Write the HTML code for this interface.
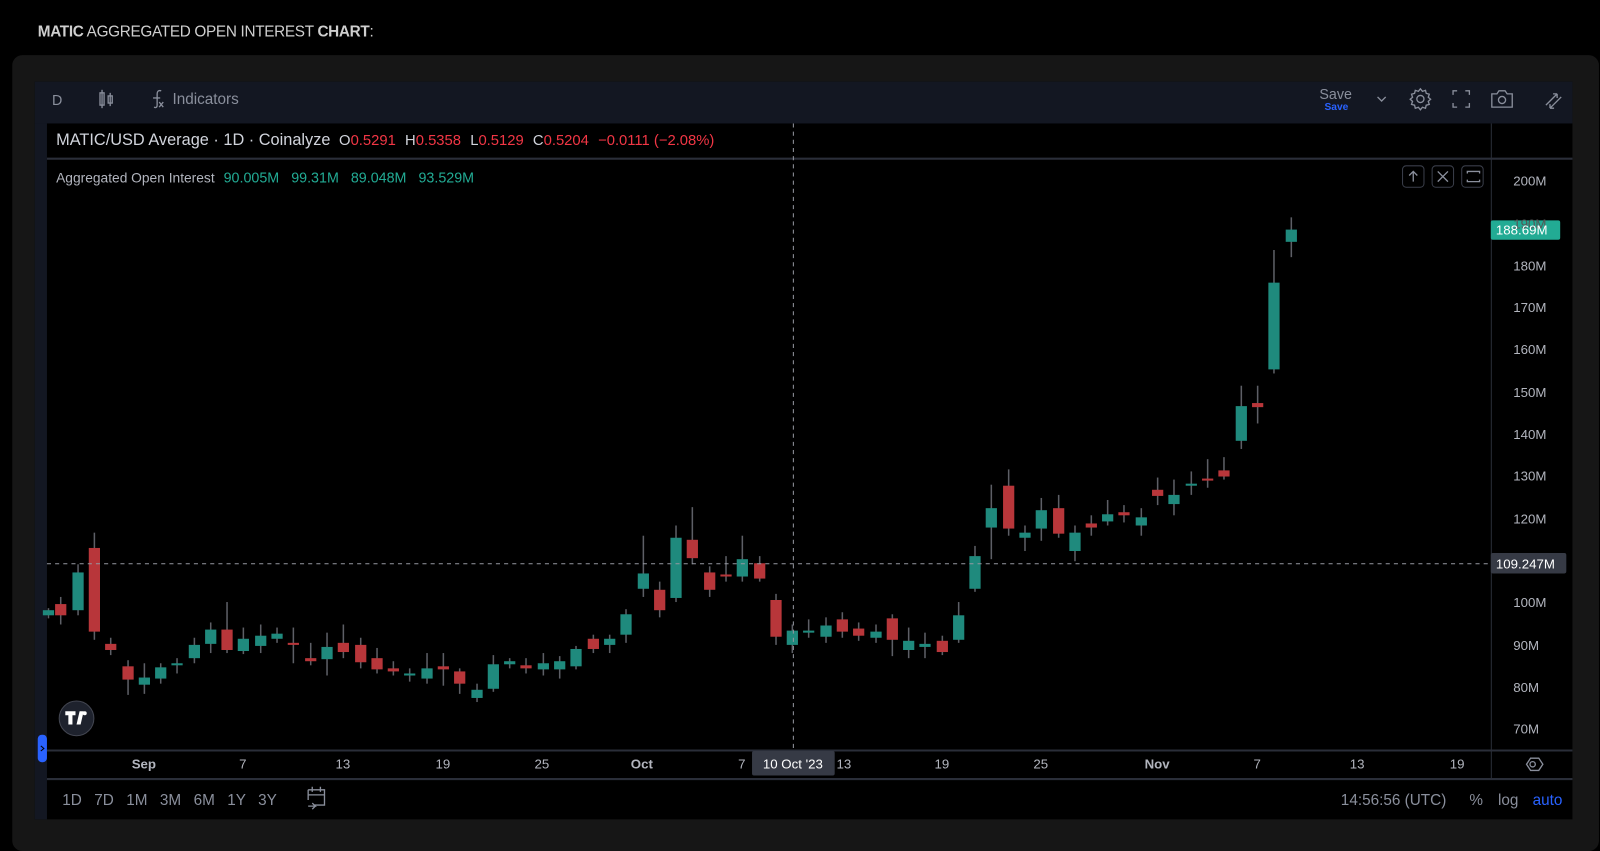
<!DOCTYPE html>
<html><head><meta charset="utf-8">
<style>
html,body{margin:0;padding:0;background:#000;width:1600px;height:825px;overflow:hidden;font-family:"Liberation Sans",Arial,sans-serif}
#w{position:absolute;left:0;top:0;width:1568px;height:809px;transform:scale(1.0204);transform-origin:0 0}
.a{position:absolute;white-space:nowrap}
.lbl{position:absolute;left:1483px;font-size:13px;color:#b2b5be}
.tl{position:absolute;top:741px;font-size:13px;color:#b2b5be;transform:translateX(-50%)}
.btn{position:absolute;top:162px;width:22px;height:22px;border:1px solid #3a3e4a;border-radius:4px;box-sizing:border-box}
</style></head><body>
<div id="w">
<div class="a" style="left:37px;top:23px;font-size:15px;color:#cfcfcf;letter-spacing:-0.3px"><b>MATIC</b> AGGREGATED OPEN INTEREST <b>CHART</b>:</div>
<div class="a" style="left:12px;top:54px;width:1555px;height:780px;background:#161616;border-radius:10px"></div>
<div class="a" style="left:34px;top:80px;width:1507px;height:723px;background:#000"></div>
<div class="a" style="left:34px;top:80px;width:1507px;height:41px;background:#131722"></div>
<div class="a" style="left:34px;top:121px;width:12px;height:682px;background:#131722"></div>
<div class="a" style="left:51px;top:90px;font-size:14px;color:#8a8f9c">D</div>
<div class="a" style="left:169px;top:89px;font-size:15px;color:#8a8f9c">Indicators</div>
<div class="a" style="left:1293px;top:84px;font-size:14px;color:#8a8f9c">Save</div>
<div class="a" style="left:1298px;top:100px;font-size:10px;color:#2962ff;font-weight:bold">Save</div>
<div class="a" style="left:55px;top:129px;font-size:16px;color:#d1d4dc">MATIC/USD Average · 1D · Coinalyze <span style="font-size:14.5px;color:#d1d4dc;margin-left:4px;word-spacing:5px">O<span style="color:#f23645">0.5291</span> H<span style="color:#f23645">0.5358</span> L<span style="color:#f23645">0.5129</span> C<span style="color:#f23645">0.5204</span> <span style="color:#f23645;word-spacing:0">−0.0111 (−2.08%)</span></span></div>
<div class="a" style="left:55px;top:166px;font-size:13.5px;color:#b2b5be">Aggregated Open Interest <span style="color:#22ab94;font-size:14px;margin-left:5px;word-spacing:2px">90.005M&nbsp; 99.31M&nbsp; 89.048M&nbsp; 93.529M</span></div>
<div class="btn" style="left:1374px"></div><div class="btn" style="left:1403px"></div><div class="btn" style="left:1432px"></div>
<svg class="a" style="left:0;top:0" width="1568" height="809" id="s">
<line x1="46" y1="155.5" x2="1541" y2="155.5" stroke="#2a2e39" stroke-width="2"/>
<line x1="1461.5" y1="121" x2="1461.5" y2="763" stroke="#2a2e39"/>
<line x1="46" y1="735.5" x2="1541" y2="735.5" stroke="#2a2e39" stroke-width="2"/>
<line x1="46" y1="763.5" x2="1541" y2="763.5" stroke="#2a2e39" stroke-width="2"/>
<g id="c"></g>
<line x1="777.5" y1="121" x2="777.5" y2="735" stroke="#9598a1" stroke-dasharray="4,4"/>
<line x1="46" y1="552.5" x2="1461" y2="552.5" stroke="#9598a1" stroke-dasharray="4,4"/>
<g stroke="#8a8f9c" fill="none" stroke-width="1.3">
<rect x="98" y="91" width="4" height="12"/><line x1="100" y1="88" x2="100" y2="106"/>
<rect x="106" y="94" width="4" height="7"/><line x1="108" y1="91" x2="108" y2="104"/>
<path d="M158 89c-3-1-4 1-4 3v11c0 2-1 3-3 2"/><line x1="150" y1="96" x2="157" y2="96"/>
<path d="M156 100l4 5M160 100l-4 5"/>
<path d="M1350 95l4 4 4-4"/>
<circle cx="1392" cy="97" r="3.5"/>
<path d="M1392 87l2 2.5 3-1 .7 3 3 .8-1 3 2.3 2-2.3 2 1 3-3 .8-.7 3-3-1-2 2.5-2-2.5-3 1-.7-3-3-.8 1-3-2.3-2 2.3-2-1-3 3-.8.7-3 3 1z"/>
<path d="M1424 93v-4h4M1436 89h4v4M1440 101v4h-4M1428 105h-4v-4"/>
<path d="M1462 92h5l2-3h6l2 3h5v13h-20z"/><circle cx="1472" cy="98" r="3.5"/>
<path d="M1515 103l11-11M1519 106l11-11M1526 92h-4M1526 92v4M1519 106h4M1519 106v-4"/>
<path d="M1385 178v-10M1381 172l4-4 4 4"/>
<path d="M1409 168l10 10M1419 168l-10 10"/>
<path d="M1438 170v-2h12v2M1438 176v2h12v-2"/>
<path d="M1496 749l4-6h8l4 6-4 6h-8z"/><circle cx="1502" cy="749" r="2.6"/>
<path d="M302 774h16v15h-10M302 774v10M306 771v5M314 771v5M302 779h16M302 790h7l-3-3M309 790l-3 3"/>
</g>
<circle cx="75" cy="704" r="17" fill="#1e222d" stroke="#434651"/>
<path d="M64 697h10v4h-3v9h-4v-9h-3z M78 697h4l-3 13h-4z" fill="#fff"/>
<circle cx="83" cy="699" r="2" fill="#fff"/>
<rect x="37" y="720" width="9" height="27" rx="4" fill="#2962ff"/>
<path d="M40 731l3 2.5-3 2.5" stroke="#000" fill="none"/>
<rect x="1461" y="216" width="68" height="19" rx="2" fill="#22ab94"/>
<rect x="1461" y="542" width="74" height="20" rx="2" fill="#363a45"/>
<rect x="737" y="736" width="81" height="24" rx="2" fill="#363a45"/>
</svg>
<div class="lbl" style="top:170px">200M</div>
<div class="lbl" style="top:212px;color:#555">190M</div>
<div class="lbl" style="top:253px">180M</div>
<div class="lbl" style="top:294px">170M</div>
<div class="lbl" style="top:335px">160M</div>
<div class="lbl" style="top:377px">150M</div>
<div class="lbl" style="top:418px">140M</div>
<div class="lbl" style="top:459px">130M</div>
<div class="lbl" style="top:501px">120M</div>
<div class="lbl" style="top:583px">100M</div>
<div class="lbl" style="top:625px">90M</div>
<div class="lbl" style="top:666px">80M</div>
<div class="lbl" style="top:707px">70M</div>
<div class="a" style="left:1466px;top:218px;font-size:13px;color:#fff">188.69M</div>
<div class="a" style="left:1466px;top:545px;font-size:13px;color:#fff">109.247M</div>
<div class="tl" style="left:141px;font-weight:bold">Sep</div>
<div class="tl" style="left:238px">7</div><div class="tl" style="left:336px">13</div><div class="tl" style="left:434px">19</div><div class="tl" style="left:531px">25</div>
<div class="tl" style="left:629px;font-weight:bold">Oct</div><div class="tl" style="left:727px">7</div>
<div class="tl" style="left:777px;color:#fff">10 Oct '23</div>
<div class="tl" style="left:827px">13</div><div class="tl" style="left:923px">19</div><div class="tl" style="left:1020px">25</div>
<div class="tl" style="left:1134px;font-weight:bold">Nov</div><div class="tl" style="left:1232px">7</div><div class="tl" style="left:1330px">13</div><div class="tl" style="left:1428px">19</div>
<div class="a" style="left:61px;top:776px;font-size:15px;color:#8a8f9c;word-spacing:8px">1D 7D 1M 3M 6M 1Y 3Y</div>
<div class="a" style="left:1314px;top:776px;font-size:15px;color:#8a8f9c">14:56:56 (UTC)</div>
<div class="a" style="left:1440px;top:776px;font-size:15px;color:#8a8f9c">%</div>
<div class="a" style="left:1468px;top:776px;font-size:15px;color:#8a8f9c">log</div>
<div class="a" style="left:1502px;top:776px;font-size:15px;color:#2962ff">auto</div>
</div>
<script>
var d=[[47,'g',598,603,596,606],[59,'r',592,603,585,612],[76,'g',561,598,553,603],[92,'r',537,619,522,627],[108,'r',631,637,625,642],[125,'r',653,666,647,681],[141,'g',664,671,650,680],[157,'g',654,665,650,670],[173,'g',650,652,645,660],[190,'g',632,645,625,650],[206,'g',617,631,610,640],[222,'r',617,637,590,640],[238,'g',626,638,615,641],[255,'g',623,633,612,640],[271,'g',621,626,615,630],[287,'r',630,632,615,650],[304,'r',645,648,630,652],[320,'g',634,646,620,662],[336,'r',630,639,612,645],[353,'r',632,649,625,655],[369,'r',645,656,635,660],[385,'r',655,658,648,662],[401,'g',660,662,655,668],[418,'g',655,665,640,670],[434,'r',653,656,640,672],[450,'r',658,670,655,680],[467,'g',676,684,670,688],[483,'g',651,675,642,678],[499,'g',648,651,645,655],[515,'r',652,655,645,660],[532,'g',650,656,640,662],[548,'g',648,656,643,665],[564,'g',636,653,633,656],[581,'r',626,636,622,640],[597,'g',626,632,622,640],[613,'g',602,622,597,630],[630,'g',562,577,525,585],[646,'r',578,598,570,605],[662,'g',527,586,515,590],[678,'r',529,547,497,553],[695,'r',561,578,555,585],[711,'r',563,565,545,570],[727,'g',548,565,525,570],[744,'r',552,567,545,570],[760,'r',588,624,582,632],[776,'g',618,632,612,640],[792,'g',618,620,607,625],[809,'g',613,624,605,630],[825,'r',607,619,600,625],[841,'r',616,623,610,628],[858,'g',619,625,612,630],[874,'r',606,627,602,643],[890,'g',628,637,615,645],[906,'g',631,634,620,645],[923,'r',628,639,623,642],[939,'g',603,627,590,630],[955,'g',545,577,535,580],[971,'g',498,517,475,548],[988,'r',476,518,460,525],[1004,'g',522,527,515,540],[1020,'g',500,518,488,530],[1037,'r',498,523,485,527],[1053,'g',522,540,515,550],[1069,'r',513,517,505,525],[1085,'g',504,511,490,515],[1101,'r',502,505,495,512],[1118,'g',507,515,498,525],[1134,'r',480,486,468,495],[1150,'g',485,494,470,505],[1167,'g',474,476,462,485],[1183,'r',469,471,450,478],[1199,'r',461,467,448,470],[1216,'g',398,432,378,440],[1232,'r',395,399,378,415],[1248,'g',277,362,245,366],[1265,'g',225,237,213,252]];
var h='';d.forEach(function(c){var x=c[0],col=c[1]=='g'?'#1f8a7d':'#b8363a';
h+='<line x1="'+(x+.5)+'" y1="'+c[4]+'" x2="'+(x+.5)+'" y2="'+c[5]+'" stroke="#5d5f66" stroke-width="1.5"/>';
h+='<rect x="'+(x-5)+'" y="'+c[2]+'" width="11" height="'+Math.max(2,c[3]-c[2])+'" fill="'+col+'"/>';});
document.getElementById('c').innerHTML=h;
</script>
</body></html>
